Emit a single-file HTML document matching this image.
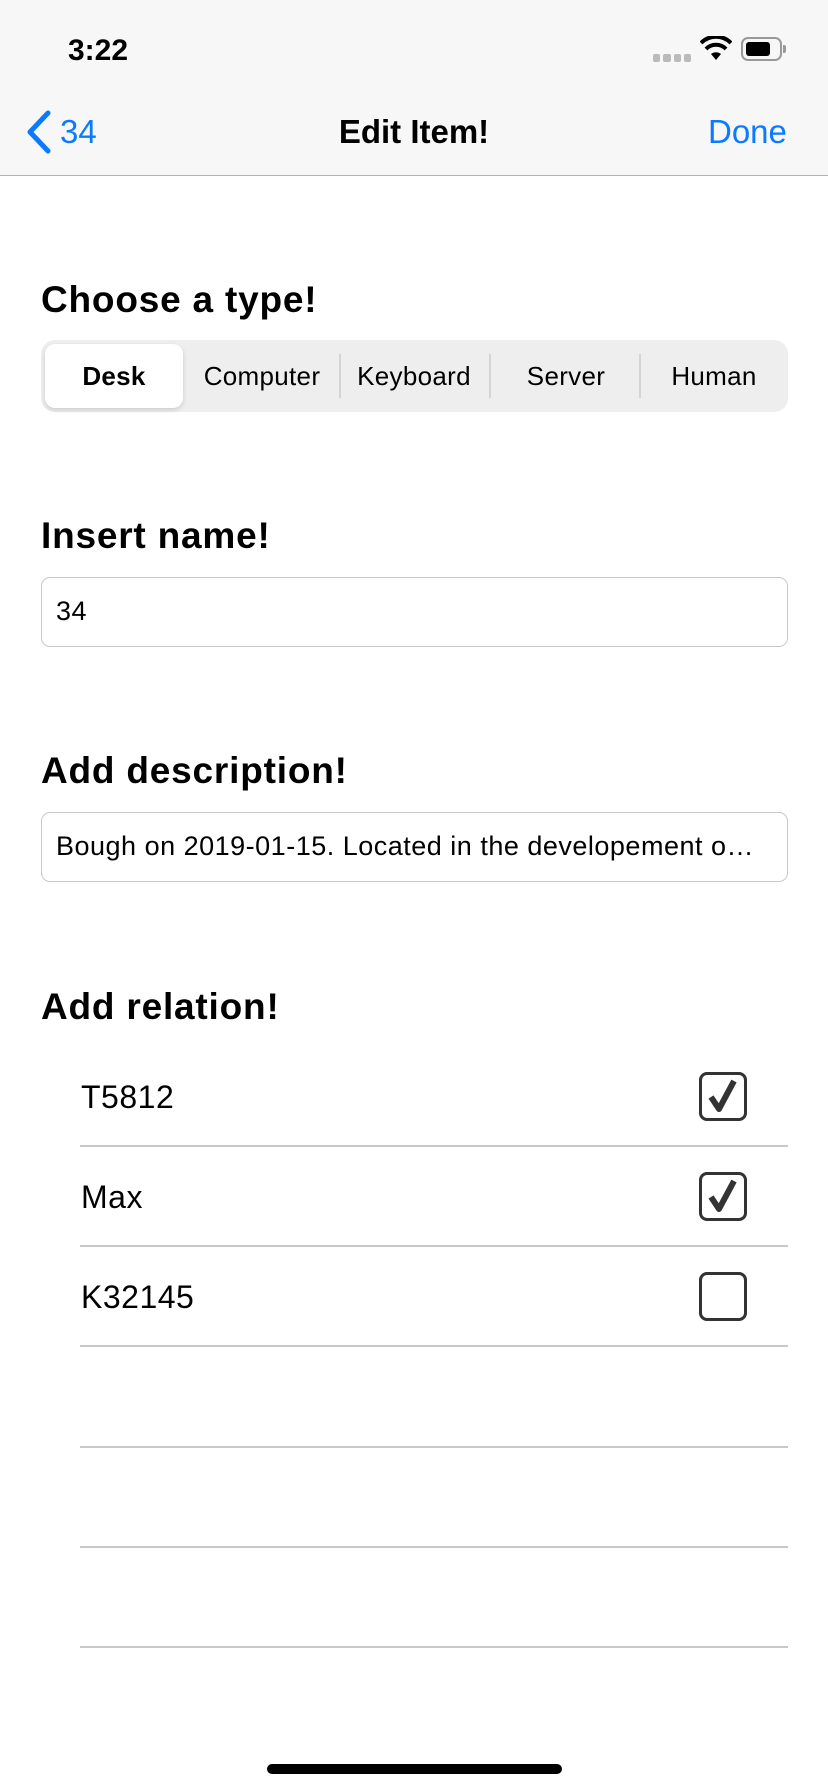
<!DOCTYPE html>
<html><head><meta charset="utf-8"><style>
*{margin:0;padding:0;box-sizing:border-box}
body{width:828px;height:1792px;background:#fff;font-family:"Liberation Sans",sans-serif;position:relative;overflow:hidden;color:#000}
.a{position:absolute}
.nav{left:0;top:0;width:828px;height:176px;background:#f7f7f7;border-bottom:1px solid #b2b2b2}
h2{position:absolute;left:41px;font-size:37px;font-weight:bold;letter-spacing:0.8px}
.seg{left:41px;top:340px;width:747px;height:72px;background:#eeeeef;border-radius:14px}
.sg{position:absolute;top:0;height:72px;line-height:72px;text-align:center;font-size:26px;letter-spacing:0.3px}
.div{position:absolute;top:14px;width:2px;height:44px;background:#d4d4d6}
.inp{left:41px;width:747px;height:70px;border:1.5px solid #c8c8cc;border-radius:9px;font-size:27px;letter-spacing:0.5px;line-height:67px;padding-left:14px;white-space:nowrap;overflow:hidden}
.row{left:81px;font-size:32px;letter-spacing:0.5px}
.sep{left:80px;width:708px;height:1.5px;background:#c8c8cc}
.cb{left:699px;width:48px;height:49px;border:3px solid #333;border-radius:8px}
</style></head><body>
<div class="a nav"></div>
<div class="a" style="left:68px;top:34px;font-size:30px;font-weight:bold">3:22</div>
<div class="a" style="left:653px;top:54px;width:38px;height:8px;display:flex;gap:3px"><i style="flex:1;background:#bbb;border-radius:2px"></i><i style="flex:1;background:#bbb;border-radius:2px"></i><i style="flex:1;background:#bbb;border-radius:2px"></i><i style="flex:1;background:#bbb;border-radius:2px"></i></div>
<svg class="a" style="left:700px;top:36px" width="32" height="26" viewBox="0 0 32 26"><path d="M16 24 L11 18 A8 8 0 0 1 21 18 Z" fill="#000"/><path d="M6 13 A14 14 0 0 1 26 13" stroke="#000" stroke-width="4" fill="none"/><path d="M1 7 A21 21 0 0 1 31 7" stroke="#000" stroke-width="4" fill="none"/></svg>
<div class="a" style="left:741px;top:37px;width:41px;height:24px;border:2px solid #999;border-radius:7px;padding:3px"><div style="width:24px;height:14px;background:#000;border-radius:3px"></div></div>
<div class="a" style="left:783px;top:45px;width:3px;height:8px;background:#999;border-radius:0 2px 2px 0"></div>
<svg class="a" style="left:24px;top:110px" width="28" height="44" viewBox="0 0 28 44"><path d="M24 3 L6 22 L24 41" stroke="#0a7aff" stroke-width="5" fill="none" stroke-linecap="round" stroke-linejoin="round"/></svg>
<div class="a" style="left:60px;top:113px;font-size:33px;color:#0a7aff">34</div>
<div class="a" style="left:0;width:828px;top:113px;text-align:center;font-size:33px;font-weight:bold">Edit Item!</div>
<div class="a" style="left:708px;top:113px;font-size:33px;color:#0a7aff">Done</div>

<h2 style="top:279px">Choose a type!</h2>
<div class="a seg">
<div class="sg" style="left:4px;top:4px;width:138px;height:64px;line-height:64px;background:#fff;border-radius:10px;box-shadow:0 2px 5px rgba(0,0,0,.15);font-weight:bold">Desk</div>
<div class="sg" style="left:146px;width:150px">Computer</div>
<div class="div" style="left:298px"></div>
<div class="sg" style="left:298px;width:150px">Keyboard</div>
<div class="div" style="left:448px"></div>
<div class="sg" style="left:450px;width:150px">Server</div>
<div class="div" style="left:598px"></div>
<div class="sg" style="left:598px;width:150px">Human</div>
</div>

<h2 style="top:515px">Insert name!</h2>
<div class="a inp" style="top:577px">34</div>
<h2 style="top:750px">Add description!</h2>
<div class="a inp" style="top:812px">Bough on 2019-01-15. Located in the developement o…</div>
<h2 style="top:986px">Add relation!</h2>

<div class="a row" style="top:1079px">T5812</div>
<div class="a cb" style="top:1072px"><svg width="42" height="43" viewBox="0 0 42 43"><path d="M9 22 L17 34 L32 6" stroke="#333" stroke-width="6" fill="none" stroke-linejoin="round"/></svg></div>
<div class="a sep" style="top:1145px"></div>
<div class="a row" style="top:1179px">Max</div>
<div class="a cb" style="top:1172px"><svg width="42" height="43" viewBox="0 0 42 43"><path d="M9 22 L17 34 L32 6" stroke="#333" stroke-width="6" fill="none" stroke-linejoin="round"/></svg></div>
<div class="a sep" style="top:1245px"></div>
<div class="a row" style="top:1279px">K32145</div>
<div class="a cb" style="top:1272px"></div>
<div class="a sep" style="top:1345px"></div>
<div class="a sep" style="top:1446px"></div>
<div class="a sep" style="top:1546px"></div>
<div class="a sep" style="top:1646px"></div>
<div class="a" style="left:267px;top:1764px;width:295px;height:10px;background:#000;border-radius:5px"></div>
</body></html>
